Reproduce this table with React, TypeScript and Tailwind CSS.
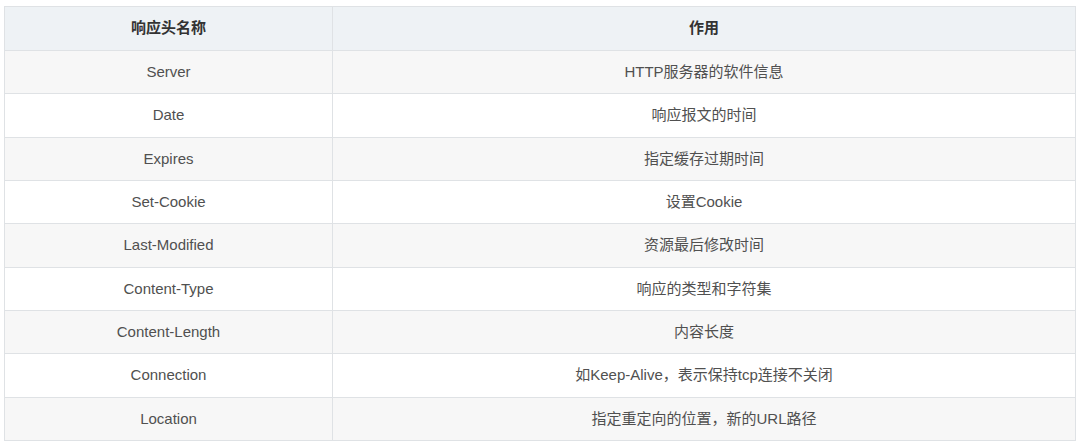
import React from "react";

const rows: [string, string][] = [
  ["Server", "HTTP服务器的软件信息"],
  ["Date", "响应报文的时间"],
  ["Expires", "指定缓存过期时间"],
  ["Set-Cookie", "设置Cookie"],
  ["Last-Modified", "资源最后修改时间"],
  ["Content-Type", "响应的类型和字符集"],
  ["Content-Length", "内容长度"],
  ["Connection", "如Keep-Alive，表示保持tcp连接不关闭"],
  ["Location", "指定重定向的位置，新的URL路径"],
];

export default function App() {
  return (
    <div
      className="w-[1080px] h-[447px] bg-white pt-[6px] pl-[4px]"
      style={{ fontFamily: '"Liberation Sans", "Noto Sans CJK SC", sans-serif' }}
    >
      <table className="w-[1072px] border-collapse text-[15px] text-[#505050]">
        <thead>
          <tr className="h-[44px] bg-[#eef2f5]">
            <th className="w-[328px] border border-[#dfe2e5] font-semibold text-[#333] text-center">响应头名称</th>
            <th className="border border-[#dfe2e5] font-semibold text-[#333] text-center">作用</th>
          </tr>
        </thead>
        <tbody>
          {rows.map(([a, b], i) => (
            <tr key={a} className={`h-[43.33px] ${i % 2 === 0 ? "bg-[#f7f7f7]" : "bg-white"}`}>
              <td className="border border-[#dfe2e5] text-center">{a}</td>
              <td className="border border-[#dfe2e5] text-center">{b}</td>
            </tr>
          ))}
        </tbody>
      </table>
    </div>
  );
}
